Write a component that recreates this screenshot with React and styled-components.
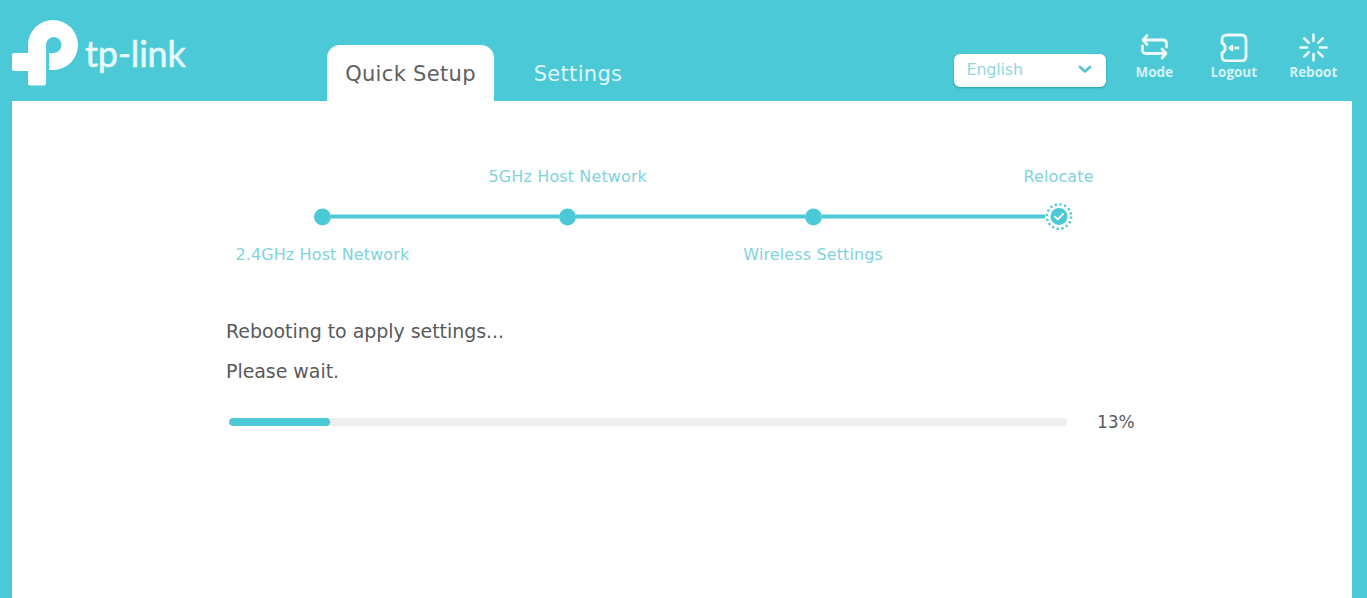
import React from "react";
import styled, { createGlobalStyle } from "styled-components";

const Teal = "#4bc9d6";

const GlobalStyle = createGlobalStyle`
  html, body {
    margin: 0;
    height: 100%;
    overflow: hidden;
    background: ${Teal};
    font-family: "DejaVu Sans", Verdana, sans-serif;
  }
`;

const Page = styled.div`
  height: 598px;
  display: flex;
  flex-direction: column;
  background: ${Teal};
`;

const Header = styled.header`
  height: 101px;
  flex: none;
  display: flex;
  align-items: flex-end;
  padding-left: 12px;
`;

const Brand = styled.div`
  width: 315px;
  height: 81px;
  margin-bottom: 15px;
  flex: none;
  display: flex;
  align-items: flex-end;
`;

const Wordmark = styled.span`
  font-family: "Lato", sans-serif;
  font-weight: 400;
  font-size: 36px;
  line-height: 44px;
  color: #e6f9fb;
  -webkit-text-stroke: 0.6px #e6f9fb;
  margin-left: 7px;
  margin-bottom: 11px;
  letter-spacing: -0.2px;
`;

const Tabs = styled.nav`
  display: flex;
  flex: none;
`;

const Tab = styled.div`
  width: ${props => props.width}px;
  height: 56px;
  display: flex;
  align-items: center;
  justify-content: center;
  padding-top: 1px;
  box-sizing: border-box;
  font-size: 21px;
  letter-spacing: 0.32px;
  border-radius: 13px 13px 0 0;
  color: ${props => (props.active ? "#5f5f5f" : "#dff7f9")};
  background: ${props => (props.active ? "#fff" : "transparent")};
`;

const Tools = styled.div`
  margin-left: auto;
  display: flex;
  align-items: flex-start;
  height: 101px;
  padding-right: 14px;
`;

const Select = styled.div`
  width: 152px;
  height: 33px;
  margin-top: 54px;
  margin-right: 9px;
  box-sizing: border-box;
  padding: 0 14px 2px 13px;
  display: flex;
  align-items: center;
  justify-content: space-between;
  background: #fff;
  border-radius: 6px;
  box-shadow: 0 1px 2px rgba(0, 90, 100, 0.45);
  font-size: 16px;
  letter-spacing: -0.2px;
  color: #93d6de;
`;

const Tool = styled.div`
  width: 79.5px;
  padding-top: 33px;
  display: flex;
  flex-direction: column;
  align-items: center;
  font-family: "Open Sans", sans-serif;
  font-weight: 700;
  font-size: 13.5px;
  line-height: 14px;
  color: #d5f3f6;

  svg {
    display: block;
    height: 29px;
    margin-bottom: 3px;
  }
`;

const Panel = styled.main`
  flex: 1;
  margin: 0 15px 0 12px;
  background: #fff;
  padding-top: 64px;
`;

const Stepper = styled.div`
  display: grid;
  grid-template-columns: repeat(4, 245.4px);
  margin-left: 187.7px;
`;

const Step = styled.div`
  display: grid;
  grid-template-rows: 22px 24px 18px;
  row-gap: 17px;
  justify-items: center;
  align-items: center;
  font-size: 16px;
  letter-spacing: 0.12px;
  color: #7fd3dd;
`;

const Track = styled.div`
  width: 100%;
  display: flex;
  align-items: center;
  transform: translateY(0.5px);
`;

const Line = styled.div`
  flex: 1;
  height: 3.5px;
  background: ${props => (props.$blank ? "transparent" : Teal)};
`;

const Dot = styled.div`
  width: 17px;
  height: 17px;
  flex: none;
  border-radius: 50%;
  background: ${Teal};
`;

const Body = styled.div`
  margin: 57px 0 0 214px;
  font-size: 19px;
  letter-spacing: -0.05px;
  color: #5a5a5a;
`;

const Message = styled.p`
  margin: 0 0 18px;
  line-height: 22px;
`;

const ProgressRow = styled.div`
  display: flex;
  align-items: center;
  margin: 29px 0 0 3px;
  font-size: 17px;
  height: 22px;
`;

const Bar = styled.div`
  width: 838px;
  height: 8px;
  border-radius: 4px;
  background: #eeeeee;
  overflow: hidden;
  margin-right: 30px;
`;

const Fill = styled.div`
  height: 100%;
  border-radius: 4px;
  background: ${Teal};
`;

const LogoMark = () => (
  <svg width="66" height="66" viewBox="12 20 66 66" fill="#fff">
    <path d="M28 53V45A25 25 0 0 1 78 45A25 25 0 0 1 53 70H49V53H53.5A8 8 0 0 0 53.5 37A8 8 0 0 0 46 45V83Q46 85.5 43.5 85.5H30.5Q28 85.5 28 83V71H14Q12 71 12 69V55Q12 53 14 53Z" />
  </svg>
);

const Chevron = () => (
  <svg width="14" height="9" viewBox="0 0 14 9" fill="none" stroke="#5cc4d0" strokeWidth="2.8" strokeLinecap="round" strokeLinejoin="round">
    <path d="M2 2l5 4.5L12 2" />
  </svg>
);

const ModeIcon = () => (
  <svg width="29" height="29" viewBox="0 0 29 29" fill="none" stroke="#eefbfc" strokeWidth="2.8" strokeLinecap="round" strokeLinejoin="round">
    <path d="M7 2.5L3 7L7 11.5" />
    <path d="M3.5 7H23Q26.5 7 26.5 10.5V14" />
    <path d="M22 16L26 20.500L22 25" />
    <path d="M25.5 20.500H6Q2.5 20.500 2.5 17V13" />
  </svg>
);

const LogoutIcon = () => (
  <svg width="29" height="29" viewBox="0 0 29 29" fill="none" stroke="#eefbfc" strokeWidth="2.8" strokeLinecap="round" strokeLinejoin="round">
    <path d="M3 10V7Q3 2 8 2H22Q27 2 27 7V23Q27 28 22 28H8Q3 28 3 23V20A5.5 5.5 0 0 0 3 10Z" />
    <path d="M10 15L13.500 12.500V17.500Z" fill="#eefbfc" strokeWidth="1.6" />
    <path d="M16.500 15H19" />
  </svg>
);

const RebootIcon = () => (
  <svg width="29" height="29" viewBox="0 0 29 29" fill="none" stroke="#eefbfc" strokeWidth="2.6" strokeLinecap="round">
    <path d="M14.500 1.500V8M14.500 21V27.500M1.500 14.500H8M21 14.500H27.500M5.300 5.300L9.800 9.800M19.200 19.200L23.700 23.700M23.700 5.300L19.200 9.800M9.800 19.200L5.300 23.700" />
  </svg>
);

const DoneIcon = () => (
  <svg width="28" height="28" viewBox="0 0 28 28" fill="none" style={{ flex: "none" }}>
    <circle cx="14" cy="14" r="12.2" stroke={Teal} strokeWidth="2.4" strokeDasharray="2.2 2.6" />
    <circle cx="14" cy="14" r="8.5" fill={Teal} />
    <path d="M10 14.300l2.800 2.600L18 11.500" stroke="#fff" strokeWidth="1.9" strokeLinecap="round" strokeLinejoin="round" />
  </svg>
);

const steps = [
  { below: "2.4GHz Host Network" },
  { above: "5GHz Host Network" },
  { below: "Wireless Settings" },
  { above: "Relocate", done: true }
];

export default function App() {
  return (
    <Page>
      <GlobalStyle />
      <Header>
        <Brand>
          <LogoMark />
          <Wordmark>tp-link</Wordmark>
        </Brand>
        <Tabs>
          <Tab active width={167}>Quick Setup</Tab>
          <Tab width={168}>Settings</Tab>
        </Tabs>
        <Tools>
          <Select>
            English
            <Chevron />
          </Select>
          <Tool><ModeIcon />Mode</Tool>
          <Tool><LogoutIcon />Logout</Tool>
          <Tool><RebootIcon />Reboot</Tool>
        </Tools>
      </Header>
      <Panel>
        <Stepper>
          {steps.map((step, i) => (
            <Step key={i}>
              <span>{step.above}</span>
              <Track>
                <Line $blank={i === 0} />
                {step.done ? <DoneIcon /> : <Dot />}
                <Line $blank={i === steps.length - 1} />
              </Track>
              <span>{step.below}</span>
            </Step>
          ))}
        </Stepper>
        <Body>
          <Message>Rebooting to apply settings...</Message>
          <Message>Please wait.</Message>
          <ProgressRow>
            <Bar>
              <Fill style={{ width: "12%" }} />
            </Bar>
            13%
          </ProgressRow>
        </Body>
      </Panel>
    </Page>
  );
}
